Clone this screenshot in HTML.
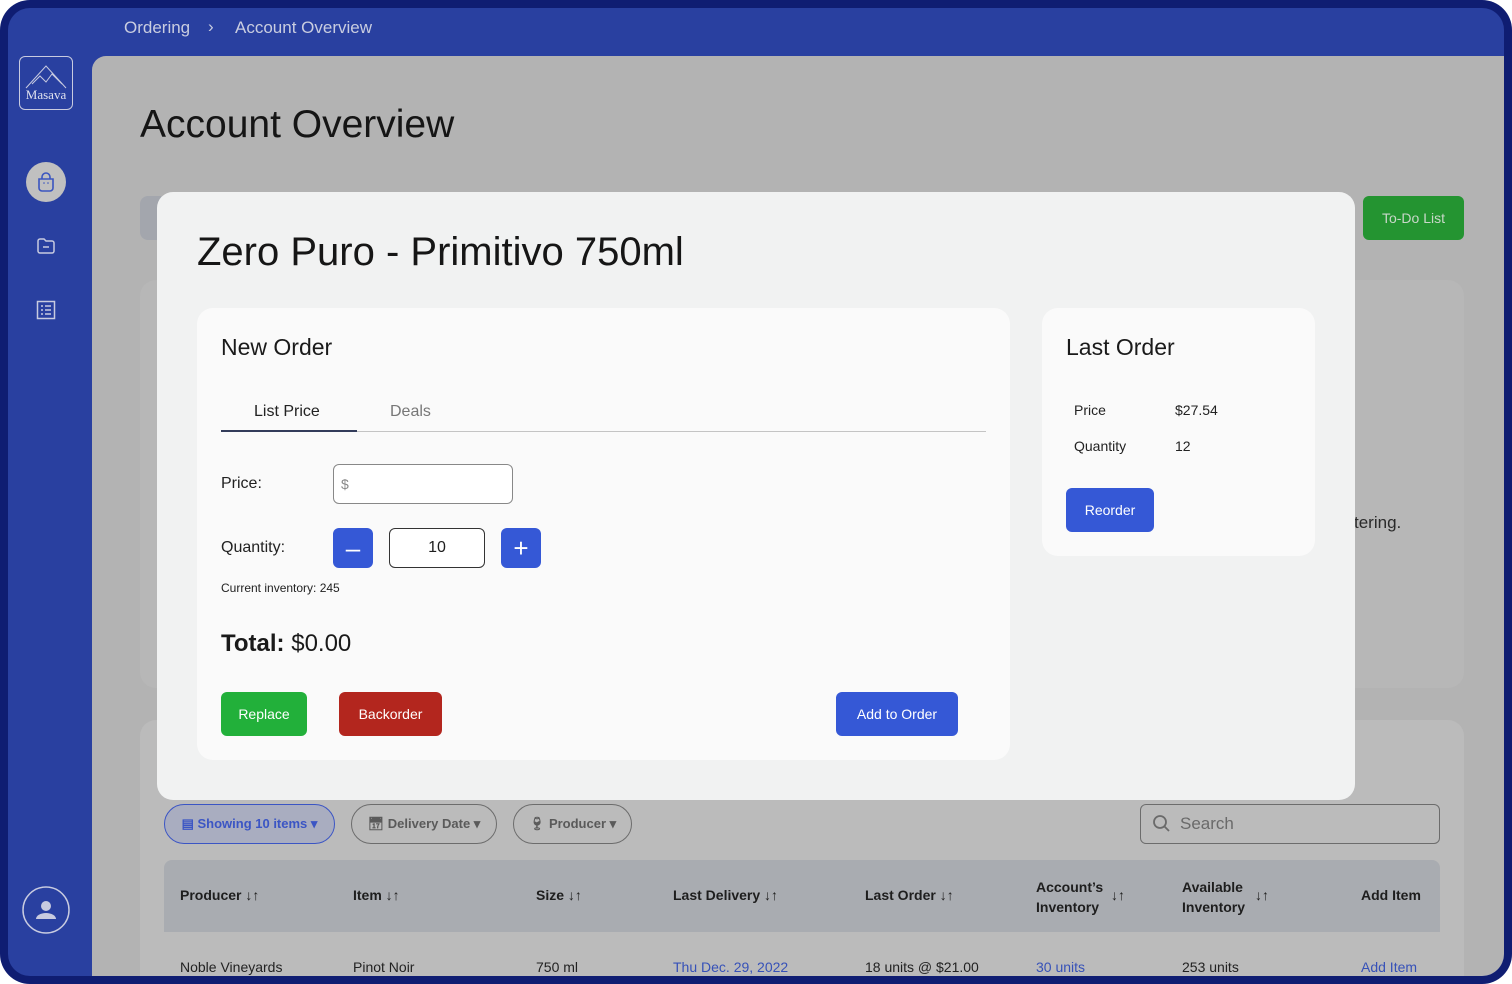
<!DOCTYPE html>
<html><head><meta charset="utf-8">
<style>
*{box-sizing:border-box;margin:0;padding:0}
body{width:1512px;height:984px;overflow:hidden;background:#fff;font-family:"Liberation Sans",sans-serif;color:#1e1e1e;position:relative}
.a{position:absolute}
.frame{left:0;top:0;width:1512px;height:984px;background:#0f1d72;border-radius:30px}
.inner{left:8px;top:8px;width:1496px;height:968px;background:#2940a0;border-radius:22px;overflow:hidden}
.btn{position:absolute;color:#fff;font-size:14px;display:flex;align-items:center;justify-content:center;border-radius:6px}
.th{position:absolute;font-size:14px;color:#1e1e1e;font-weight:bold}
.td{position:absolute;font-size:14px;color:#222}
.lnk{color:#3651b8}
.pill{position:absolute;height:40px;top:804px;border:1px solid #6c6c6c;border-radius:20px;font-size:13px;color:#5a5a5a;display:flex;align-items:center;justify-content:center;gap:5px;font-weight:600}
</style></head><body>
<div class="a frame"></div>
<div class="a inner">
<div class="a" style="left:84px;top:48px;width:1412px;height:920px;background:#b3b3b3;border-radius:14px 0 0 0"></div>
</div>
<div class="a" style="left:124px;top:18px;font-size:17px;color:#c9cde0">Ordering</div>
<div class="a" style="left:208px;top:17px;font-size:17px;color:#c9cde0">&#x203A;</div>
<div class="a" style="left:235px;top:18px;font-size:17px;color:#c9cde0">Account Overview</div>
<!-- logo -->
<div class="a" style="left:19px;top:56px;width:54px;height:54px;border:1px solid #c8cbe0;border-radius:6px"></div>
<svg class="a" style="left:22px;top:62px" width="48" height="28" viewBox="0 0 48 28"><path d="M4 26 L24 4 L44 26 M10 22 L18 14 L24 20 L30 12 L40 22" fill="none" stroke="#c8cbe0" stroke-width="1"/></svg>
<div class="a" style="left:19px;top:87px;width:54px;text-align:center;font-family:'Liberation Serif',serif;font-size:13px;color:#dfe1ee">Masava</div>
<!-- nav icons -->
<div class="a" style="left:26px;top:162px;width:40px;height:40px;border-radius:50%;background:#c0c0c0"></div>
<svg class="a" style="left:34px;top:170px" width="24" height="24" viewBox="0 0 24 24"><path d="M5 9 h14 v9 a3 3 0 0 1-3 3 h-8 a3 3 0 0 1-3-3z M8 9 V7 a4 4 0 0 1 8 0 V9" fill="none" stroke="#3a55c0" stroke-width="1.6"/><circle cx="10" cy="13" r=".8" fill="#3a55c0"/><circle cx="14" cy="13" r=".8" fill="#3a55c0"/></svg>
<svg class="a" style="left:36px;top:236px" width="20" height="20" viewBox="0 0 20 20"><path d="M2 5 a2 2 0 0 1 2-2 h4 l2 2 h6 a2 2 0 0 1 2 2 v8 a2 2 0 0 1-2 2 H4 a2 2 0 0 1-2-2z M7 11 h6" fill="none" stroke="#c8cbe0" stroke-width="1.5"/></svg>
<svg class="a" style="left:36px;top:300px" width="20" height="20" viewBox="0 0 20 20"><rect x="1.5" y="1.5" width="17" height="17" fill="none" stroke="#c8cbe0" stroke-width="1.5"/><path d="M5 6h2M9 6h6M5 10h2M9 10h6M5 14h2M9 14h6" stroke="#c8cbe0" stroke-width="1.6"/></svg>
<svg class="a" style="left:22px;top:886px" width="48" height="48" viewBox="0 0 48 48"><circle cx="24" cy="24" r="23" fill="none" stroke="#c8cbe0" stroke-width="1.5"/><circle cx="24" cy="20" r="5" fill="#c8cbe0"/><path d="M14 33 a10 6 0 0 1 20 0z" fill="#c8cbe0"/></svg>
<!-- main -->
<div class="a" style="left:140px;top:103px;font-size:39px;color:#151515">Account Overview</div>
<div class="a" style="left:140px;top:196px;width:60px;height:44px;background:#a3a6ad;border-radius:8px"></div>
<div class="btn" style="left:1363px;top:196px;width:101px;height:44px;background:#249431;color:#c9d7c9">To-Do List</div>
<div class="a" style="left:140px;top:280px;width:1324px;height:408px;background:#b7b7b7;border-radius:16px"></div>
<div class="a" style="left:1354px;top:513px;font-size:17px;color:#2a2a2a">tering.</div>
<div class="a" style="left:140px;top:720px;width:1324px;height:256px;background:#bbbbbb;border-radius:16px 16px 0 0"></div>
<div class="pill" style="left:164px;width:171px;border-color:#3b55c4;background:#a9adc0;color:#3b55c4">&#9636; Showing 10 items &#9662;</div>
<div class="pill" style="left:351px;width:146px">&#128197;&#xFE0E; Delivery Date &#9662;</div>
<div class="pill" style="left:513px;width:119px">&#x1F377;&#xFE0E; Producer &#9662;</div>
<div class="a" style="left:1140px;top:804px;width:300px;height:40px;border:1px solid #6c6c6c;border-radius:6px"></div>
<svg class="a" style="left:1152px;top:814px" width="20" height="20" viewBox="0 0 20 20"><circle cx="8" cy="8" r="6" fill="none" stroke="#6a6a6a" stroke-width="1.8"/><path d="M12.5 12.5 L17 17" stroke="#6a6a6a" stroke-width="1.8"/></svg>
<div class="a" style="left:1180px;top:814px;font-size:17px;color:#6a6a6a">Search</div>
<div class="a" style="left:164px;top:860px;width:1276px;height:72px;background:#a9acb1;border-radius:8px 8px 0 0"></div>
<div class="th" style="left:180px;top:887px">Producer ↓↑</div>
<div class="th" style="left:353px;top:887px">Item ↓↑</div>
<div class="th" style="left:536px;top:887px">Size ↓↑</div>
<div class="th" style="left:673px;top:887px">Last Delivery ↓↑</div>
<div class="th" style="left:865px;top:887px">Last Order ↓↑</div>
<div class="th" style="left:1036px;top:877px;line-height:20px">Account’s<br>Inventory</div><div class="th" style="left:1111px;top:887px">↓↑</div>
<div class="th" style="left:1182px;top:877px;line-height:20px">Available<br>Inventory</div><div class="th" style="left:1255px;top:887px">↓↑</div>
<div class="th" style="left:1361px;top:887px">Add Item</div>
<div class="td" style="left:180px;top:959px">Noble Vineyards</div>
<div class="td" style="left:353px;top:959px">Pinot Noir</div>
<div class="td" style="left:536px;top:959px">750 ml</div>
<div class="td lnk" style="left:673px;top:959px">Thu Dec. 29, 2022</div>
<div class="td" style="left:865px;top:959px">18 units @ $21.00</div>
<div class="td lnk" style="left:1036px;top:959px">30 units</div>
<div class="td" style="left:1182px;top:959px">253 units</div>
<div class="td lnk" style="left:1361px;top:959px">Add Item</div>
<!-- bottom frame strip with rounded outer corners -->
<div class="a" style="left:30px;top:976px;width:1452px;height:8px;background:#0f1d72"></div>
<!-- modal -->
<div class="a" style="left:157px;top:192px;width:1198px;height:608px;background:#f1f2f2;border-radius:16px"></div>
<div class="a" style="left:197px;top:230px;font-size:40px;color:#161616">Zero Puro - Primitivo 750ml</div>
<div class="a" style="left:197px;top:308px;width:813px;height:452px;background:#fafafa;border-radius:16px"></div>
<div class="a" style="left:221px;top:334px;font-size:23px;color:#1a1a1a">New Order</div>
<div class="a" style="left:254px;top:403px;font-size:16px;color:#222">List Price</div>
<div class="a" style="left:390px;top:403px;font-size:16px;color:#777">Deals</div>
<div class="a" style="left:221px;top:431px;width:765px;height:1px;background:#c4c4c4"></div>
<div class="a" style="left:221px;top:430px;width:136px;height:2px;background:#333c5a"></div>
<div class="a" style="left:221px;top:475px;font-size:16px;color:#222">Price:</div>
<div class="a" style="left:333px;top:464px;width:180px;height:40px;border:1px solid #888;border-radius:6px;background:#fff"></div>
<div class="a" style="left:341px;top:476px;font-size:14px;color:#888">$</div>
<div class="a" style="left:221px;top:539px;font-size:16px;color:#222">Quantity:</div>
<div class="btn" style="left:333px;top:528px;width:40px;height:40px;background:#3558d6;font-size:26px">&#8211;</div>
<div class="a" style="left:389px;top:528px;width:96px;height:40px;border:1px solid #333;border-radius:6px;background:#fff;text-align:center;line-height:38px;font-size:16px">10</div>
<div class="btn" style="left:501px;top:528px;width:40px;height:40px;background:#3558d6;font-size:26px">+</div>
<div class="a" style="left:221px;top:581px;font-size:12px;color:#222">Current inventory: 245</div>
<div class="a" style="left:221px;top:630px;font-size:24px;color:#1a1a1a"><b>Total:</b> $0.00</div>
<div class="btn" style="left:221px;top:692px;width:86px;height:44px;background:#22b03a">Replace</div>
<div class="btn" style="left:339px;top:692px;width:103px;height:44px;background:#b3261e">Backorder</div>
<div class="btn" style="left:836px;top:692px;width:122px;height:44px;background:#3558d6">Add to Order</div>
<div class="a" style="left:1042px;top:308px;width:273px;height:248px;background:#fafafa;border-radius:16px"></div>
<div class="a" style="left:1066px;top:334px;font-size:23px;color:#1a1a1a">Last Order</div>
<div class="a" style="left:1074px;top:402px;font-size:14px;color:#222">Price</div>
<div class="a" style="left:1175px;top:402px;font-size:14px;color:#222">$27.54</div>
<div class="a" style="left:1074px;top:438px;font-size:14px;color:#222">Quantity</div>
<div class="a" style="left:1175px;top:438px;font-size:14px;color:#222">12</div>
<div class="btn" style="left:1066px;top:488px;width:88px;height:44px;background:#3558d6">Reorder</div>
</body></html>
